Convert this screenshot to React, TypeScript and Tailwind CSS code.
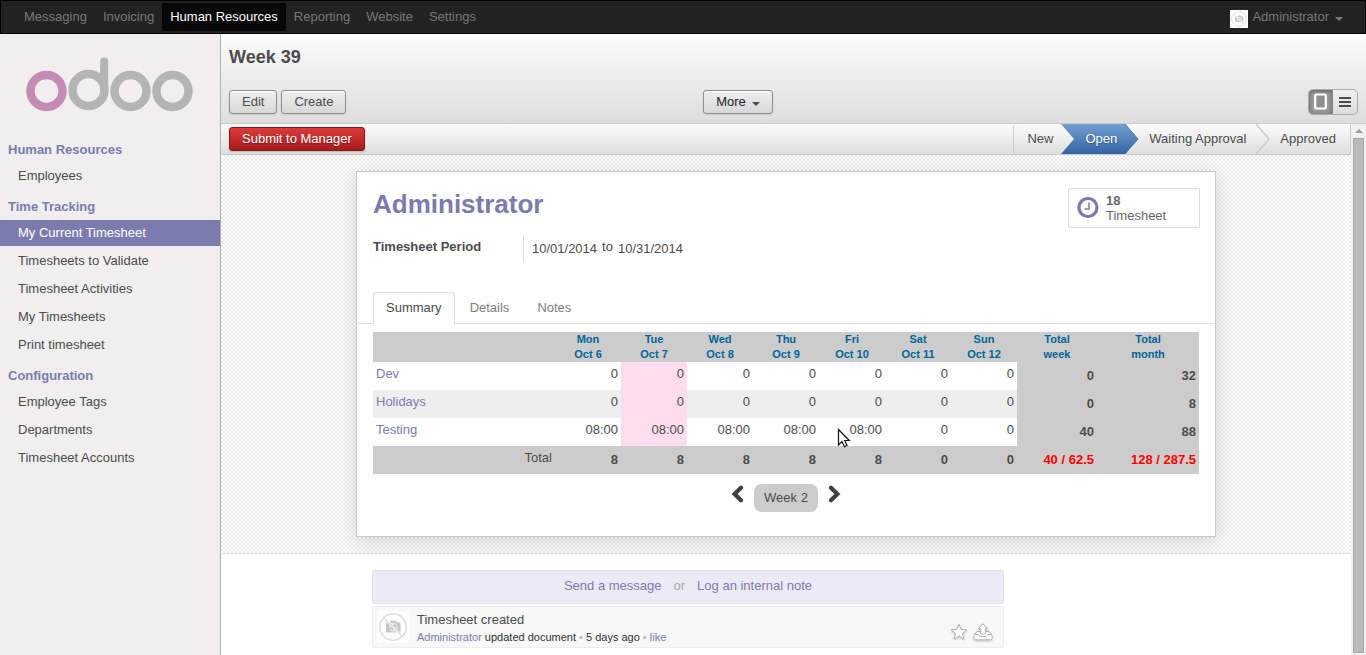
import React from 'react';

const NAV = ['Messaging', 'Invoicing', 'Human Resources', 'Reporting', 'Website', 'Settings'];

const MENU = [
  { title: 'Human Resources', items: ['Employees'] },
  {
    title: 'Time Tracking',
    items: ['My Current Timesheet', 'Timesheets to Validate', 'Timesheet Activities', 'My Timesheets', 'Print timesheet'],
  },
  { title: 'Configuration', items: ['Employee Tags', 'Departments', 'Timesheet Accounts'] },
];

const DAYS = [
  ['Mon', 'Oct 6'],
  ['Tue', 'Oct 7'],
  ['Wed', 'Oct 8'],
  ['Thu', 'Oct 9'],
  ['Fri', 'Oct 10'],
  ['Sat', 'Oct 11'],
  ['Sun', 'Oct 12'],
];

const ROWS = [
  { name: 'Dev', hours: ['0', '0', '0', '0', '0', '0', '0'], week: '0', month: '32' },
  { name: 'Holidays', hours: ['0', '0', '0', '0', '0', '0', '0'], week: '0', month: '8' },
  { name: 'Testing', hours: ['08:00', '08:00', '08:00', '08:00', '08:00', '0', '0'], week: '40', month: '88' },
];

const TOTALS = ['8', '8', '8', '8', '8', '0', '0'];

function Avatar({ className }: { className: string }) {
  return (
    <svg className={className} viewBox="0 0 32 32" aria-hidden="true">
      <rect width="32" height="32" fill="#fff" />
      <path d="M9 11.500h3.500l1.300-1.700h5.400l1.300 1.700H23.500v10H9z" fill="#c6c6c6" />
      <circle cx="16.500" cy="16.300" r="4.200" fill="#ececec" />
      <circle cx="16.500" cy="16.300" r="3" fill="#bdbdbd" />
      <path d="M6.800 6.500l18.500 19" stroke="#fff" strokeWidth="2.600" />
      <circle cx="16" cy="16" r="13.200" fill="none" stroke="#dedede" strokeWidth="1.600" />
      <path d="M6.500 6.500l19 19" stroke="#dadada" strokeWidth="1.300" />
    </svg>
  );
}

function Logo() {
  return (
    <svg width="168" height="56" viewBox="0 0 168 56" fill="none" strokeWidth="8.400" role="img" aria-label="odoo">
      <circle cx="20.500" cy="34" r="16" stroke="#c48bb4" />
      <circle cx="62.500" cy="33" r="16" stroke="#b4b4b4" />
      <path d="M78.200 33V4.500" stroke="#b4b4b4" strokeWidth="8" strokeLinecap="round" />
      <circle cx="104.500" cy="34" r="16" stroke="#b4b4b4" />
      <circle cx="146.500" cy="34" r="16" stroke="#b4b4b4" />
    </svg>
  );
}

function TopBar() {
  return (
    <header className="flex h-[34px] items-start justify-between border border-black bg-[#222] px-[15px] pt-[2px] text-[#777]">
      <nav className="flex">
        {NAV.map((n) => (
          <a
            key={n}
            href="#"
            className={
              n === 'Human Resources'
                ? 'bg-[#080808] px-2 py-[5px] leading-[18px] text-white'
                : 'px-2 py-[5px] leading-[18px]'
            }
          >
            {n}
          </a>
        ))}
      </nav>
      <button className="flex items-start pl-2 pr-[7px] pt-[5px] leading-[18px]">
        <Avatar className="mr-1 mt-[2px] h-[18px] w-[18px]" />
        Administrator
        <svg className="ml-[6px] mt-[9px]" width="8" height="4" viewBox="0 0 8 4" aria-hidden="true">
          <path d="M0 0h8L4 4z" fill="#777" />
        </svg>
      </button>
    </header>
  );
}

function Sidebar() {
  return (
    <aside className="w-[221px] shrink-0 border-r border-[#afafb6] bg-[#f0eeee]">
      <div className="pb-6 pl-[26px] pt-[23px]">
        <Logo />
      </div>
      {MENU.map((g) => (
        <section key={g.title} className="mb-[5px]">
          <h2 className="pl-2 font-bold leading-[26px] text-[#7c7bad]">{g.title}</h2>
          <ul className="flex flex-col gap-[2px]">
            {g.items.map((i) => (
              <li key={i}>
                <a
                  href="#"
                  className={
                    i === 'My Current Timesheet'
                      ? 'block bg-[#7c7bad] pl-[18px] leading-[26px] text-white'
                      : 'block pl-[18px] leading-[26px]'
                  }
                >
                  {i}
                </a>
              </li>
            ))}
          </ul>
        </section>
      ))}
    </aside>
  );
}

const BTN =
  'h-6 rounded-[3px] border border-[#8e8e8e] bg-linear-to-b from-[#efefef] to-[#d8d8d8] px-3 leading-[22px] shadow-[0_1px_2px_rgba(0,0,0,0.1),inset_0_1px_0_rgba(255,255,255,0.8)]';

function PageHeader() {
  return (
    <div className="border-b border-[#cacaca] bg-linear-to-b from-[#fcfcfc] to-[#dedede] px-2">
      <h1 className="h-11 text-lg font-bold leading-[46px]">Week 39</h1>
      <div className="mb-2 mt-[11px] grid h-[26px] grid-cols-[42%_1fr_auto] items-center">
        <div className="flex gap-1">
          <button className={BTN}>Edit</button>
          <button className={BTN}>Create</button>
        </div>
        <div>
          <button className={`${BTN} flex items-center text-[#222]`}>
            More
            <svg className="ml-[6px] mt-[3px]" width="8" height="4" viewBox="0 0 8 4" aria-hidden="true">
              <path d="M0 0h8L4 4z" fill="#4c4c4c" />
            </svg>
          </button>
        </div>
        <div className="flex h-[26px] overflow-hidden rounded-[5px] border border-[#ababab] bg-linear-to-b from-[#efefef] to-[#dedede]">
          <button
            aria-label="Form view"
            className="flex w-6 items-center justify-center border-r border-[#8a8a8a] bg-[#999] shadow-[inset_0_1px_4px_rgba(0,0,0,0.4)]"
          >
            <svg width="13" height="18" viewBox="0 0 13 18" aria-hidden="true">
              <rect x="1.200" y="1.500" width="10.600" height="14" rx="1" fill="#8e8e8e" stroke="#fff" strokeWidth="2.200" />
            </svg>
          </button>
          <button aria-label="List view" className="flex w-6 items-center justify-center">
            <svg width="12" height="10" viewBox="0 0 12 10" aria-hidden="true">
              <path d="M0 1h12M0 5h12M0 9h12" stroke="#4c4c4c" strokeWidth="2" />
            </svg>
          </button>
        </div>
      </div>
    </div>
  );
}

function StageArrow({ kind }: { kind: 'in' | 'out' | 'plain' }) {
  return (
    <svg className="shrink-0" width="14" height="30" viewBox="0 0 14 30" aria-hidden="true">
      <defs>
        <linearGradient id={`blue-${kind}`} x1="0" y1="0" x2="0" y2="30" gradientUnits="userSpaceOnUse">
          <stop offset="0" stopColor="#729fcf" />
          <stop offset="1" stopColor="#3465a4" />
        </linearGradient>
      </defs>
      {kind === 'in' && <path d="M0 0H14V30H0L13 15z" fill="url(#blue-in)" />}
      {kind === 'out' && (
        <>
          <path d="M0 0L13 15L0 30z" fill="url(#blue-out)" />
          <path d="M0 0L13 15L0 30" fill="none" stroke="#3a5f96" strokeWidth="0.800" />
        </>
      )}
      {kind === 'plain' && <path d="M0 0L13 15L0 30" fill="none" stroke="#c8c8c8" strokeWidth="1.300" />}
    </svg>
  );
}

function StatusBar() {
  return (
    <div className="flex h-[31px] items-center justify-between border-b border-r border-[#cacaca] bg-linear-to-b from-[#fcfcfc] to-[#dedede] pl-2">
      <button className="h-6 rounded-[3px] border border-[#8c1515] bg-linear-to-b from-[#dc3a3a] to-[#a51c1c] px-3 leading-[22px] text-white [text-shadow:0_1px_1px_rgba(0,0,0,0.35)] shadow-[0_1px_2px_rgba(0,0,0,0.2)]">
        Submit to Manager
      </button>
      <ol className="flex leading-[30px]">
        <li className="rounded-[3px] border-l border-[#cacaca] pl-[13px] pr-2">New</li>
        <li className="flex text-white">
          <StageArrow kind="in" />
          <span className="bg-linear-to-b from-[#729fcf] to-[#3465a4] pl-[10px] pr-2 [text-shadow:0_1px_1px_rgba(0,0,0,0.3)]">
            Open
          </span>
          <StageArrow kind="out" />
        </li>
        <li className="pl-[10px] pr-[10px]">Waiting Approval</li>
        <li className="flex pr-[14px]">
          <StageArrow kind="plain" />
          <span className="pl-[10px]">Approved</span>
        </li>
      </ol>
    </div>
  );
}

function Pointer() {
  return (
    <svg className="absolute left-[18px] top-[10px]" width="14" height="20" viewBox="0 0 14 20" aria-hidden="true">
      <path
        d="M1.500 1.500V17L5 13.500L7.500 18.700L10 17.500L7.700 12.500H12.300z"
        fill="#fff"
        stroke="#111"
        strokeWidth="1.200"
      />
    </svg>
  );
}

function Timesheet() {
  const sum = 'bg-[#ccc] px-[3px] text-right align-middle font-bold';
  return (
    <table className="w-full table-fixed border-collapse">
      <colgroup>
        <col />
        {DAYS.map((d) => (
          <col key={d[0]} className="w-[66px]" />
        ))}
        <col className="w-20" />
        <col className="w-[102px]" />
      </colgroup>
      <thead>
        <tr className="bg-[#ccc] text-[11px] leading-[15px] text-[#069]">
          <td />
          {[...DAYS, ['Total', 'week'], ['Total', 'month']].map((d) => (
            <th key={d.join(' ')} scope="col" className="p-0 text-center font-bold">
              {d[0]}
              <br />
              {d[1]}
            </th>
          ))}
        </tr>
      </thead>
      <tbody>
        {ROWS.map((r) => (
          <tr key={r.name} className={r.name === 'Holidays' ? 'h-7 bg-[#eee]' : 'h-7'}>
            <th scope="row" className="px-[3px] pt-[3px] text-left align-top font-normal leading-[18px]">
              <a href="#" className="text-[#7c7bad]">
                {r.name}
              </a>
            </th>
            {r.hours.map((h, i) => (
              <td
                key={i}
                className={
                  i === 1
                    ? 'bg-[#ffddee] px-[3px] pt-[3px] text-right align-top leading-[18px]'
                    : 'relative px-[3px] pt-[3px] text-right align-top leading-[18px]'
                }
              >
                {h}
                {r.name === 'Testing' && i === 4 && <Pointer />}
              </td>
            ))}
            <td className={sum}>{r.week}</td>
            <td className={sum}>{r.month}</td>
          </tr>
        ))}
      </tbody>
      <tfoot>
        <tr className="h-7 bg-[#ccc]">
          <th scope="row" className="px-[3px] pt-[3px] text-right align-top font-normal leading-[18px]">
            Total
          </th>
          {TOTALS.map((t, i) => (
            <td key={i} className={sum}>
              {t}
            </td>
          ))}
          <td className={`${sum} text-[#f00]`}>40 / 62.5</td>
          <td className={`${sum} text-[#f00]`}>128 / 287.5</td>
        </tr>
      </tfoot>
    </table>
  );
}

function Sheet() {
  return (
    <div className="mx-auto max-w-[860px] border border-[#c8c8d3] bg-white pb-6 shadow-[0_4px_20px_rgba(0,0,0,0.15)]">
      <div className="flex items-start justify-between pl-4 pr-[15px] pt-4">
        <div>
          <h2 className="text-[26px] font-bold leading-8 text-[#7c7bad]">Administrator</h2>
          <dl className="mt-4 flex">
            <dt className="w-[150px] font-bold leading-[22px]">Timesheet Period</dt>
            <dd className="flex h-[26px] gap-[5px] border-l border-[#ddd] pl-2 leading-[26px]">
              <span>10/01/2014</span>
              <span className="leading-[22px]">to</span>
              <span>10/31/2014</span>
            </dd>
          </dl>
        </div>
        <button className="flex h-10 w-[132px] items-center border border-[#ddd] pl-2 text-left leading-[15px] text-[#666]">
          <svg className="mr-[7px] shrink-0" width="22" height="22" viewBox="0 0 22 22" fill="none" stroke="#7c7bad" aria-hidden="true">
            <circle cx="11" cy="10.500" r="9" strokeWidth="3.200" />
            <path d="M12 5.500v6.500H7.500" strokeWidth="1.500" />
          </svg>
          <span>
            <b className="block">18</b>
            Timesheet
          </span>
        </button>
      </div>
      <div role="tablist" className="mt-[30px] flex gap-[2px] border-b border-[#ddd] px-4 leading-[30px]">
        <button role="tab" aria-selected="true" className="-mb-px rounded-t border border-b-0 border-[#ddd] bg-white px-3 pb-px">
          Summary
        </button>
        <button role="tab" aria-selected="false" className="px-[13px] text-[#808080]">
          Details
        </button>
        <button role="tab" aria-selected="false" className="px-[13px] text-[#808080]">
          Notes
        </button>
      </div>
      <div className="px-4 pt-2">
        <Timesheet />
        <div className="mt-[10px] flex justify-center gap-[10px]">
          <button aria-label="Previous week" className="h-5">
            <svg width="13" height="18" viewBox="0 0 13 18" fill="none" aria-hidden="true">
              <path d="M10 2.800L3.600 9L10 15.200" stroke="#404040" strokeWidth="4.200" strokeLinecap="round" />
            </svg>
          </button>
          <span className="rounded-lg bg-[#ccc] px-[10px] leading-7">Week 2</span>
          <button aria-label="Next week" className="h-5">
            <svg width="13" height="18" viewBox="0 0 13 18" fill="none" aria-hidden="true">
              <path d="M3 2.800L9.400 9L3 15.200" stroke="#404040" strokeWidth="4.200" strokeLinecap="round" />
            </svg>
          </button>
        </div>
      </div>
    </div>
  );
}

function Chatter() {
  return (
    <div className="mx-auto max-w-[860px] px-4 pt-4">
      <div className="max-w-[632px]">
        <div className="rounded-[2px] border border-[#e2e2ee] bg-[#ebebf5] pb-[2px] text-center leading-[30px] text-[#aaa]">
          <a href="#" className="text-[#7c7bad]">Send a message</a>
          <span className="mx-3">or</span>
          <a href="#" className="text-[#7c7bad]">Log an internal note</a>
        </div>
        <article className="mt-[2px] flex rounded-[2px] border border-[#eee] bg-[#f8f8f8] px-1 pb-[2px] pt-1">
          <Avatar className="h-8 w-8 rounded-[2px]" />
          <div className="ml-2 flex-1">
            <p className="leading-[18px]">Timesheet created</p>
            <p className="text-[11px] leading-4 text-[#b0b0d8]">
              <a href="#" className="text-[#7c7bad]">Administrator</a> <span className="text-[#333]">updated document</span> •{' '}
              <span className="text-[#333]">5 days ago</span> • <a href="#" className="text-[#7c7bad]">like</a>
            </p>
          </div>
          <div className="flex items-center gap-[5px] pr-[6px] pt-2">
            <button aria-label="Mark as todo">
              <svg className="drop-shadow-[0_1px_1px_rgba(0,0,0,0.2)]" width="18" height="18" viewBox="0 0 18 18" fill="#fff" stroke="#b0b0b0" aria-hidden="true">
                <path d="M9 1.200L11.200 6.500L16.800 6.900L12.500 10.500L13.900 16L9 13L4.100 16L5.500 10.500L1.200 6.900L6.800 6.500z" />
              </svg>
            </button>
            <button aria-label="Share">
              <svg className="drop-shadow-[0_1px_1px_rgba(0,0,0,0.2)]" width="20" height="18" viewBox="0 0 20 18" fill="#fff" stroke="#b0b0b0" aria-hidden="true">
                <path d="M4 8.500L1 12.500V15.500Q1 16.800 2.500 16.800H17.500Q19 16.800 19 15.500V12.500L16 8.500z" />
                <path d="M1.500 11.500H5.500L7 13.500H13L14.500 11.500H18.500" fill="none" />
                <path d="M10 0.800L14.800 5.800H12.300V11H7.700V5.800H5.200z" />
              </svg>
            </button>
          </div>
        </article>
      </div>
    </div>
  );
}

export default function App() {
  return (
    <div className="flex min-h-screen flex-col bg-white font-['Liberation_Sans',Arial,sans-serif] text-[13px] leading-[18px] text-[#4c4c4c]">
      <TopBar />
      <div className="flex flex-1">
        <Sidebar />
        <main className="flex min-w-0 flex-1 flex-col">
          <PageHeader />
          <div className="flex flex-1">
            <div className="min-w-0 flex-1">
              <StatusBar />
              <div className="border-b border-[#ddd] bg-[repeating-conic-gradient(#ececec_0_25%,#fff_0_50%)] bg-[length:4px_4px] px-4 py-4">
                <Sheet />
              </div>
              <Chatter />
            </div>
            <div aria-hidden="true" className="flex w-[15px] flex-col items-center bg-[#f1f1f1] pb-[2px]">
              <svg className="my-[5px]" width="8" height="4" viewBox="0 0 8 4">
                <path d="M0 4h8L4 0z" fill="#999" />
              </svg>
              <div className="w-[11px] flex-1 border border-[#a8a8a8] bg-[#bbb]" />
            </div>
          </div>
        </main>
      </div>
    </div>
  );
}
